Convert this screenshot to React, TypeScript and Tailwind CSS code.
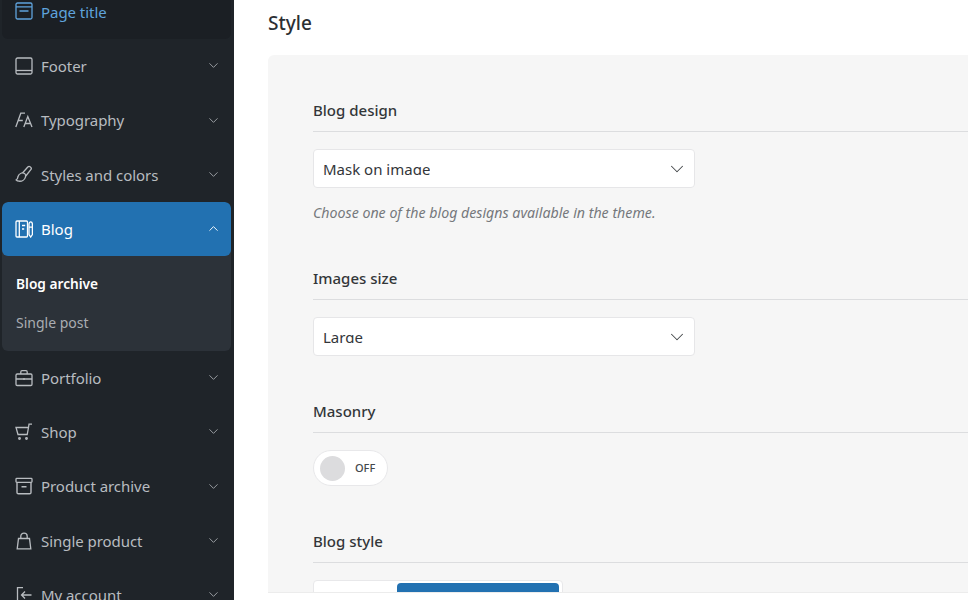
import { ChevronDown, ChevronUp } from "lucide-react";
import type { ReactNode } from "react";

const font = "font-['Noto_Sans','Open_Sans',sans-serif]";

function Ico({ children, className }: { children: ReactNode; className?: string }) {
  return (
    <svg viewBox="0 0 18 18" width="18" height="18" fill="none" stroke="currentColor" strokeWidth="1.3" className={className}>
      {children}
    </svg>
  );
}

const icons: Record<string, ReactNode> = {
  page: <><rect x="1" y="1" width="16" height="16" rx="1.500" /><path d="M1 4.800h16M4.500 9h9" /></>,
  footer: <><rect x="1" y="1" width="16" height="16" rx="1.500" /><path d="M1 13.500h16" /></>,
  type: <path d="M.8 16 5.800 2.200H10M2.800 9.500h5M8.800 16l4-10.500 4.200 10.500M10.300 12.500h5.500" />,
  brush: <><path d="M7.500 8 12.800 2c1.500-1.600 4.400.6 3.200 2.400L10.800 11" /><path d="M6.500 8c2.500-.8 4.800 1.200 4 3.800-.7 2.800-3.500 4.700-6.500 4.400-1.800-.2-2.800-1.200-2.800-1.200 1.500-.7 1.500-2 1.800-3.500.3-1.400 1.800-2.800 3.500-3.500Z" /></>,
  blog: <><rect x="1" y="1" width="11.500" height="16" rx="1" /><path d="M4.300 1v16M7 5.500h3.200M7 9h2.200" /><path d="M14 4.500c0-3.500 3.400-3.500 3.400 0v10l-1.700 2.500-1.700-2.500ZM14 7.200h3.400" /></>,
  portfolio: <><rect x="1" y="5" width="16" height="11.500" rx="1.200" /><path d="M5.800 5V3c0-.8.500-1.400 1.200-1.400h4c.7 0 1.200.6 1.200 1.400v2M1 10h16M9 9v2" /></>,
  shop: <><path d="M1 4.500h12.500l-1.300 7H3ZM13.500 4.500 14 1.200h3" /><circle cx="4.500" cy="15.500" r=".8" /><circle cx="11.500" cy="15.500" r=".8" /></>,
  archive: <><rect x="1" y="1.400" width="16" height="4" rx=".8" /><path d="M2 5.400v10c0 .8.600 1.400 1.400 1.400h11.200c.8 0 1.400-.6 1.400-1.400v-10M6.500 9.800h5" strokeWidth="1.400" /></>,
  bag: <><path d="M3.500 6.500h11l1.300 10.300H2.200Z" /><path d="M5.800 6.500V4.200c0-1.800 1.400-3 3.200-3s3.200 1.200 3.200 3v2.300" /></>,
  account: <><path d="M8 1.600H2.500v14.800H8M16.500 9H6.500M10 5.500 6.500 9l3.500 3.500" /></>,
};

function MenuItem({ icon, label, bar }: { icon: string; label: string; bar?: boolean }) {
  return (
    <div className={`flex h-[54.3px] items-center pl-[13px] pr-[10px] text-[15px] ${bar ? "text-[#5fa3dc]" : "text-[#b8bcc0]"}`}>
      <Ico className="mr-[8px] shrink-0">{icons[icon]}</Ico>
      <span className="flex-1 pt-[1px] tracking-[-0.05px]">{label}</span>
      {!bar && <ChevronDown size={15} strokeWidth={1.5} className="text-[#9ea2a6]" />}
    </div>
  );
}

function Field({ title, children, gap }: { title: string; children: ReactNode; gap: string }) {
  return (
    <div className={gap}>
      <div className="border-b border-[#dcdddf] pb-[11px] text-[15px] font-medium leading-[20px] text-[#333639]">{title}</div>
      <div className="mt-[17px]">{children}</div>
    </div>
  );
}

function SelectBox({ value }: { value: string }) {
  return (
    <div className="flex h-[39px] w-[382px] items-center justify-between overflow-hidden rounded-[4px] border border-[#e6e6e8] bg-white pl-[9px] pr-[6px]">
      <span className="h-[17px] -translate-y-[2px] overflow-hidden text-[15px] leading-[22px] text-[#33363a]">{value}</span>
      <ChevronDown size={22} strokeWidth={1.1} className="text-[#44474a]" />
    </div>
  );
}

export default function App() {
  return (
    <div className={`flex h-[600px] w-[968px] overflow-hidden bg-white ${font}`}>
      <aside className="w-[234px] shrink-0 overflow-hidden bg-[#1f2429] pl-[2px] pr-[3px]">
        <div className="-mt-[15.7px] rounded-b-[6px] bg-[#1b1f24]">
          <MenuItem icon="page" label="Page title" bar />
        </div>
        <MenuItem icon="footer" label="Footer" />
        <MenuItem icon="type" label="Typography" />
        <MenuItem icon="brush" label="Styles and colors" />
        <div className="overflow-hidden rounded-[6px] bg-[#2c3239]">
          <div className="flex h-[54px] items-center rounded-[6px] bg-[#2271b1] pl-[13px] pr-[10px] text-[15px] text-white">
            <Ico className="mr-[8px] shrink-0">{icons.blog}</Ico>
            <span className="flex-1 pt-[1px]">Blog</span>
            <ChevronUp size={15} strokeWidth={1.5} />
          </div>
          <div className="px-[14px] pb-[10px] pt-[10px] text-[14px]">
            <div className="flex h-[38px] items-center text-[13.7px] font-semibold text-white">Blog archive</div>
            <div className="flex h-[37px] items-center text-[#a9adb2]">Single post</div>
          </div>
        </div>
        <MenuItem icon="portfolio" label="Portfolio" />
        <MenuItem icon="shop" label="Shop" />
        <MenuItem icon="archive" label="Product archive" />
        <MenuItem icon="bag" label="Single product" />
        <MenuItem icon="account" label="My account" />
      </aside>
      <main className="min-w-0 flex-1 pl-[34px]">
        <h2 className="pt-[10px] text-[19px] font-medium leading-[26px] text-[#2c2f33]">Style</h2>
        <section className="mt-[19px] h-[538px] overflow-hidden rounded-tl-[6px] border-b border-[#ececec] bg-[#f6f6f6] pl-[45px] pt-[45px]">
          <Field title="Blog design" gap="">
            <SelectBox value="Mask on image" />
            <p className="mt-[15px] text-[14.2px] italic leading-[20px] text-[#75787c]">Choose one of the blog designs available in the theme.</p>
          </Field>
          <Field title="Images size" gap="mt-[45px]">
            <SelectBox value="Large" />
          </Field>
          <Field title="Masonry" gap="mt-[45px]">
            <div className="flex h-[36px] w-[75px] items-center rounded-full border border-[#e8e8ea] bg-white pl-[6px]">
              <span className="h-[25px] w-[25px] rounded-full bg-[#dcdcde]" />
              <span className="ml-[10px] text-[11px] font-medium text-[#44474b]">OFF</span>
            </div>
          </Field>
          <Field title="Blog style" gap="mt-[45px]">
            <div className="h-[40px] w-[250px] rounded-[4px] border border-[#e8e8ea] bg-white pl-[83px] pt-[2px]">
              <div className="h-[40px] w-[162px] rounded-[4px] bg-[#2271b1]" />
            </div>
          </Field>
        </section>
      </main>
    </div>
  );
}
